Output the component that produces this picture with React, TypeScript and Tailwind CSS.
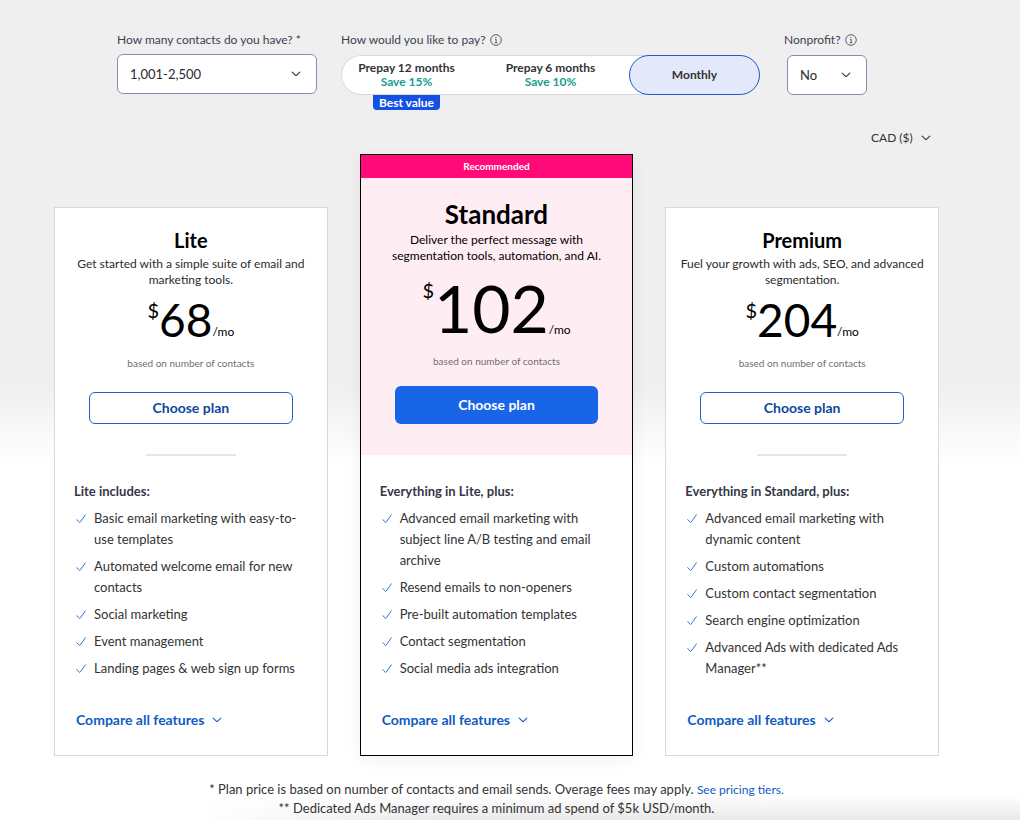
import { useState } from "react";
import clsx from "clsx";

const plans = [
  {
    name: "Lite",
    description: "Get started with a simple suite of email and marketing tools.",
    price: "68",
    heading: "Lite includes:",
    recommended: false,
    features: [
      "Basic email marketing with easy-to-use templates",
      "Automated welcome email for new contacts",
      "Social marketing",
      "Event management",
      "Landing pages & web sign up forms",
    ],
  },
  {
    name: "Standard",
    description: "Deliver the perfect message with segmentation tools, automation, and AI.",
    price: "102",
    heading: "Everything in Lite, plus:",
    recommended: true,
    features: [
      "Advanced email marketing with subject line A/B testing and email archive",
      "Resend emails to non-openers",
      "Pre-built automation templates",
      "Contact segmentation",
      "Social media ads integration",
    ],
  },
  {
    name: "Premium",
    description: "Fuel your growth with ads, SEO, and advanced segmentation.",
    price: "204",
    heading: "Everything in Standard, plus:",
    recommended: false,
    features: [
      "Advanced email marketing with dynamic content",
      "Custom automations",
      "Custom contact segmentation",
      "Search engine optimization",
      "Advanced Ads with dedicated Ads Manager**",
    ],
  },
];

const terms = [
  { id: "12", label: "Prepay 12 months", save: "Save 15%", best: true },
  { id: "6", label: "Prepay 6 months", save: "Save 10%", best: false },
  { id: "1", label: "Monthly", save: "", best: false },
];

function Chevron({ className }: { className?: string }) {
  return (
    <svg viewBox="0 0 10 6" fill="none" stroke="currentColor" strokeWidth="1.1" strokeLinecap="round" strokeLinejoin="round" className={className} aria-hidden="true">
      <path d="M1.2 1.2l3.1 2.9a1 1 0 0 0 1.4 0l3.1-2.9" />
    </svg>
  );
}

function Check() {
  return (
    <svg viewBox="0 0 12 21" fill="none" stroke="#3b70e0" strokeWidth="1" strokeLinecap="round" strokeLinejoin="round" className="h-[21px] w-3 shrink-0" aria-hidden="true">
      <path d="M0.8 11.6l2.4 2.6c.3.3.6.3.9 0l5.3-7.4" />
    </svg>
  );
}

function Info() {
  return (
    <svg viewBox="0 0 12 12" fill="none" stroke="#4b4f5c" strokeWidth="0.9" className="h-3 w-3" aria-hidden="true">
      <circle cx="6" cy="6" r="5.3" />
      <path d="M5 5.2h1.1v3.4M4.7 8.7h2.7" />
      <circle cx="6" cy="3.3" r="0.6" fill="#4b4f5c" stroke="none" />
    </svg>
  );
}

function PlanCard({ plan }: { plan: (typeof plans)[number] }) {
  const rec = plan.recommended;

  return (
    <section
      className={clsx(
        "flex flex-col border bg-white",
        rec ? "border-black shadow-[0_4px_16px_rgba(0,0,0,0.06)]" : "mt-[53px] border-[#d9d9d9]"
      )}
    >
      {rec && (
        <div className="h-[23px] bg-[#ff0a78] text-center text-[10px] leading-[22px] font-bold text-white">
          Recommended
        </div>
      )}

      <div className={clsx("flex flex-col items-center text-center", rec ? "bg-[#ffedf4] pt-5 pb-[31px]" : "pt-[18px]")}>
        <h2 className={clsx("font-bold text-black", rec ? "text-[26px] leading-8" : "text-xl leading-7")}>
          {plan.name}
        </h2>
        <p className={clsx("mt-0.5 text-xs leading-4", rec ? "px-6 text-black" : "px-3 text-[#2b2b2b]")}>
          {plan.description}
        </p>
        <div className="mt-2 flex text-black">
          <span className={clsx("text-xl", rec ? "leading-9" : "leading-7")}>$</span>
          <span className={rec ? "text-[66px] leading-[72px]" : "text-[46px] leading-[48px]"}>{plan.price}</span>
          <span className={clsx("self-end text-xs", rec ? "leading-7" : "leading-6")}>/mo</span>
        </div>
        <p className={clsx("text-[10px] leading-[18px] text-[#6f6f6f]", rec ? "mt-2" : "mt-2.5")}>
          based on number of contacts
        </p>
        <div className="w-full px-[34px]">
          {rec ? (
            <button className="mt-4 h-[38px] w-full rounded-md bg-[#1865e8] text-sm font-bold text-white">
              Choose plan
            </button>
          ) : (
            <button className="mt-5 h-8 w-full rounded-md border border-[#1f63c8] text-sm font-bold text-[#0d479e]">
              Choose plan
            </button>
          )}
        </div>
        {!rec && <div className="mt-[30px] h-0.5 w-[90px] bg-[#e6e6e6]" />}
      </div>

      <div className={clsx("flex grow flex-col px-[19px] pb-[25px]", rec ? "pt-[26px]" : "pt-[25px]")}>
        <h3 className="text-[13px] leading-5 font-bold text-[#353747]">{plan.heading}</h3>
        <ul className="mt-[7px] mb-[31px] ml-0.5 flex flex-col gap-1.5 text-[13px] leading-[21px] text-[#333]">
          {plan.features.map((feature) => (
            <li key={feature} className="flex gap-1.5">
              <Check />
              <span>{feature}</span>
            </li>
          ))}
        </ul>
        <button className="mt-auto ml-0.5 flex items-center gap-2 self-start text-sm leading-5 font-bold text-[#0f5bc4]">
          Compare all features
          <Chevron className="w-2.5" />
        </button>
      </div>
    </section>
  );
}

export default function App() {
  const [term, setTerm] = useState("1");

  return (
    <div className="min-h-screen bg-[linear-gradient(#efefef_385px,#fff_465px)] pl-[54px] pr-[81px] pt-8 font-['Lato',sans-serif]">
      <div className="flex flex-wrap gap-6 pl-[63px]">
        <div className="w-[200px]">
          <label htmlFor="contacts" className="block text-xs leading-4 text-[#3b3f52]">
            How many contacts do you have? *
          </label>
          <div className="relative mt-1.5">
            <select id="contacts" className="h-10 w-full appearance-none rounded-md border border-[#8390ab] bg-white px-3 pt-0.5 text-[13px] text-[#2b2b2b]">
              <option>1,001-2,500</option>
              <option>2,501-5,000</option>
            </select>
            <Chevron className="pointer-events-none absolute right-4 top-[17px] w-2.5 text-[#333]" />
          </div>
        </div>

        <div className="w-[419px]">
          <div className="flex items-center gap-1 text-xs leading-4 text-[#3b3f52]">
            <span id="pay">How would you like to pay?</span>
            <Info />
          </div>
          <div role="radiogroup" aria-labelledby="pay" className="mt-[7px] flex h-10 rounded-full bg-white shadow-[inset_0_0_0_1px_#d9d9d9]">
            {terms.map((t) => (
              <label
                key={t.id}
                className={clsx(
                  "relative flex cursor-pointer flex-col items-center justify-center rounded-full text-xs leading-[14px] font-bold text-[#333]",
                  t.id === "6" ? "grow" : "w-[131px]",
                  term === t.id && "border border-[#1f58d0] bg-[#e3e9fb]"
                )}
              >
                <input type="radio" name="term" className="sr-only" checked={term === t.id} onChange={() => setTerm(t.id)} />
                <span>{t.label}</span>
                {t.save && <span className="text-[#16a08c]">{t.save}</span>}
                {t.best && (
                  <span className="absolute top-full rounded-b-sm bg-[#1450e6] px-1.5 leading-[15px] text-white">
                    Best value
                  </span>
                )}
              </label>
            ))}
          </div>
        </div>

        <div>
          <div className="flex items-center gap-1 text-xs leading-4 text-[#3b3f52]">
            <label htmlFor="nonprofit">Nonprofit?</label>
            <Info />
          </div>
          <div className="relative mt-[7px] ml-[3px] w-20">
            <select id="nonprofit" className="h-10 w-full appearance-none rounded-md border border-[#8390ab] bg-white px-3 pt-0.5 text-[13px] text-[#2b2b2b]">
              <option>No</option>
              <option>Yes</option>
            </select>
            <Chevron className="pointer-events-none absolute right-4 top-[17px] w-2.5 text-[#333]" />
          </div>
        </div>
      </div>

      <div className="mt-[33px] flex justify-end pr-2">
        <div className="relative flex">
          <select aria-label="Currency" className="h-5 appearance-none bg-transparent pr-[18px] text-xs text-[#333]">
            <option>CAD ($)</option>
            <option>USD ($)</option>
          </select>
          <Chevron className="pointer-events-none absolute right-0 top-[7px] w-2.5 text-[#333]" />
        </div>
      </div>

      <main className="mt-1.5 grid grid-cols-3 gap-8">
        {plans.map((plan) => (
          <PlanCard key={plan.name} plan={plan} />
        ))}
      </main>

      <footer className="-mr-[81px] bg-[linear-gradient(to_right,#fff_15%,transparent_40%),linear-gradient(to_top,#e8e8e8,transparent_26px)] pt-6 pr-[81px] pb-1 text-center text-[13px] leading-[18px] text-[#333]">
        <p>
          * Plan price is based on number of contacts and email sends. Overage fees may apply.{" "}
          <a href="#tiers" className="text-xs leading-[18px] text-[#0f5bc4]">See pricing tiers.</a>
        </p>
        <p>** Dedicated Ads Manager requires a minimum ad spend of $5k USD/month.</p>
      </footer>
    </div>
  );
}
